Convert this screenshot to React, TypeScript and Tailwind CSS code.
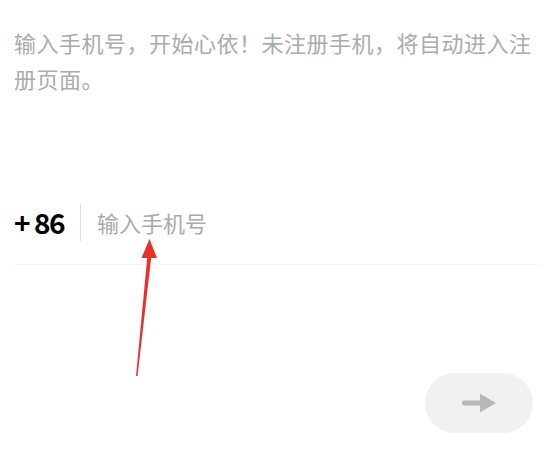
import { useState } from 'react'

const cjk = '"Noto Sans CJK SC", "Noto Sans", sans-serif'

function ArrowRight() {
  return (
    <svg width="36" height="22" viewBox="0 0 36 22" fill="#b8b8b8">
      <rect x="1" y="8.5" width="20" height="5" rx="2" />
      <path d="M19 1.5 L35 11 L19 20.5 Z" />
    </svg>
  )
}

export default function App() {
  const [phone, setPhone] = useState('')

  return (
    <div className="relative w-[553px] h-[451px] bg-white overflow-hidden" style={{ fontFamily: cjk }}>
      <div className="px-[14px] pt-[24px]">
        <p className="text-[22px] leading-[36px] tracking-[0.5px] text-[#ababab]">
          输入手机号，开始心依！未注册手机，将自动进入注册页面。
        </p>

        <div className="mt-[106px] flex items-center h-[40px]">
          <span className="text-[28px] font-semibold text-black tracking-[-1.5px] w-[66px]">+ 86</span>
          <div className="w-px h-[38px] bg-[#dedede]" />
          <input
            value={phone}
            onChange={(e) => setPhone(e.target.value)}
            placeholder="输入手机号"
            className="ml-4 flex-1 text-[22px] outline-none placeholder:text-[#aaaaaa] bg-transparent"
          />
        </div>

        <div className="mt-[22px] h-px bg-[#f3f3f3]" />

        <div className="mt-[108px] flex justify-end pr-[6px]">
          <button className="w-[108px] h-[60px] rounded-full bg-[#f1f1f1] flex items-center justify-center">
            <ArrowRight />
          </button>
        </div>
      </div>

      {/* red annotation arrow */}
      <svg className="absolute left-0 top-0 pointer-events-none" width="553" height="451">
        <path d="M136 376 L147.5 255 L151.5 255 L137.5 376 Z" fill="#e8302a" />
        <path d="M149.5 239 L141.5 258 L157 258 Z" fill="#e8302a" />
      </svg>
    </div>
  )
}
